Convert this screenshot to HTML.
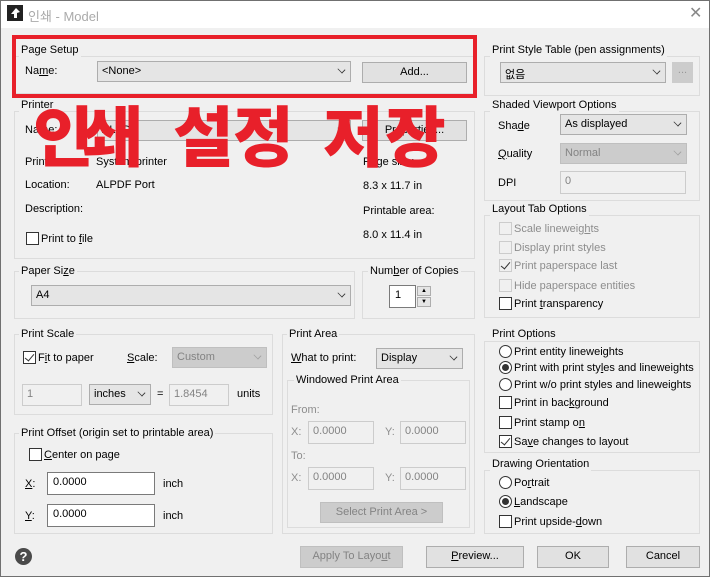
<!DOCTYPE html>
<html><head><meta charset="utf-8">
<style>
*{box-sizing:border-box;margin:0;padding:0}
body{width:710px;height:577px;overflow:hidden;background:#f0f0f0;font-family:"Liberation Sans","Noto Sans CJK KR",sans-serif;font-size:11px;color:#000;position:relative}
.a{position:absolute;white-space:nowrap}
.g{position:absolute;border:1px solid #dcdcdc}
.gl{position:absolute;background:#f0f0f0;padding:0 2px;white-space:nowrap;line-height:14px}
.cb{position:absolute;background:#e5e5e5;border:1px solid #adadad}
.cb span{position:absolute;left:4px;top:3px}
.cb i{position:absolute;right:5px;top:4px;width:7px;height:7px;border-right:1px solid #333;border-bottom:1px solid #333;transform:rotate(45deg) scale(.9,.7)}
.dis{background:#cccccc;border-color:#bfbfbf;color:#838383}
.dis i{border-color:#a0a0a0}
.btn{position:absolute;background:#e1e1e1;border:1px solid #adadad;text-align:center;line-height:19px}
.in{position:absolute;background:#fff;border:1px solid #7a7a7a;padding:3px 0 0 5px}
.ind{position:absolute;background:#f0f0f0;border:1px solid #ccc;padding:3px 0 0 4px;color:#838383}
.ck{position:absolute;width:13px;height:13px;border:1px solid #333;background:#fff}
.ckd{border-color:#ccc;background:#f0f0f0}
.rd{position:absolute;width:13px;height:13px;border:1px solid #333;border-radius:50%;background:#fff}
.rd.on::after{content:"";position:absolute;left:2px;top:2px;width:7px;height:7px;border-radius:50%;background:#333}
.tick::after{content:"";position:absolute;left:3px;top:0px;width:4px;height:8px;border-right:1.5px solid #333;border-bottom:1.5px solid #333;transform:rotate(40deg)}
.gr{color:#8d8d8d}
.big{position:absolute;color:#e8202a;font-family:"Noto Sans CJK KR",sans-serif;font-weight:900;font-size:66px;line-height:66px}
</style></head><body>
<div class="a" style="left:0;top:0;width:710px;height:28px;background:#fff"></div>
<div class="a" style="left:0;top:0;width:710px;height:577px;border:1px solid #707070"></div>
<svg class="a" style="left:7px;top:5px" width="16" height="16" viewBox="0 0 16 16"><rect width="16" height="16" fill="#222"/><path d="M4 9 L9 3 L13 7 L10 8 L10 13 L7 13 L7 9 Z" fill="#fff"/></svg>
<div class="a" style="left:28px;top:6px;font-size:13px;color:#aaa">인쇄 - Model</div>
<div class="a" style="left:689px;top:3px;font-size:16px;color:#888">✕</div>

<!-- Page Setup -->
<div class="g" style="left:14px;top:56px;width:461px;height:38px"></div>
<div class="gl" style="left:19px;top:43px">Page Setup</div>
<div class="a" style="left:25px;top:65px">Na<u>m</u>e:</div>
<div class="cb" style="left:97px;top:61px;width:254px;height:21px"><span>&lt;None&gt;</span><i></i></div>
<div class="btn" style="left:362px;top:62px;width:105px;height:21px">Add...</div>

<!-- Printer -->
<div class="g" style="left:14px;top:111px;width:461px;height:148px"></div>
<div class="gl" style="left:19px;top:98px">Printer</div>
<div class="a" style="left:25px;top:124px">Name:</div>
<div class="cb" style="left:97px;top:120px;width:254px;height:21px"><span>ALPDF</span><i></i></div>
<div class="btn" style="left:362px;top:120px;width:105px;height:21px">Properties...</div>
<div class="a" style="left:25px;top:156px">Printer:</div>
<div class="a" style="left:96px;top:156px">System printer</div>
<div class="a" style="left:25px;top:179px">Location:</div>
<div class="a" style="left:96px;top:179px">ALPDF Port</div>
<div class="a" style="left:25px;top:203px">Description:</div>
<div class="ck" style="left:26px;top:232px"></div>
<div class="a" style="left:41px;top:233px">Print to <u>f</u>ile</div>
<div class="a" style="left:363px;top:156px">Page size:</div>
<div class="a" style="left:363px;top:180px">8.3 x 11.7 in</div>
<div class="a" style="left:363px;top:205px">Printable area:</div>
<div class="a" style="left:363px;top:229px">8.0 x 11.4 in</div>

<!-- Paper size -->
<div class="g" style="left:14px;top:271px;width:341px;height:48px"></div>
<div class="gl" style="left:19px;top:264px">Paper Si<u>z</u>e</div>
<div class="cb" style="left:31px;top:285px;width:320px;height:21px"><span>A4</span><i></i></div>
<div class="g" style="left:362px;top:271px;width:113px;height:48px"></div>
<div class="gl" style="left:368px;top:264px">Num<u>b</u>er of Copies</div>
<div class="in" style="left:389px;top:285px;width:27px;height:23px">1</div>
<div class="a" style="left:417px;top:286px;width:14px;height:10px;border:1px solid #adadad;background:#e5e5e5;font-size:6px;text-align:center;line-height:8px">▲</div>
<div class="a" style="left:417px;top:297px;width:14px;height:10px;border:1px solid #adadad;background:#e5e5e5;font-size:6px;text-align:center;line-height:8px">▼</div>

<!-- Print Scale -->
<div class="g" style="left:14px;top:334px;width:259px;height:81px"></div>
<div class="gl" style="left:19px;top:327px">Print Scale</div>
<div class="ck tick" style="left:23px;top:351px"></div>
<div class="a" style="left:38px;top:352px">F<u>i</u>t to paper</div>
<div class="a" style="left:127px;top:352px"><u>S</u>cale:</div>
<div class="cb dis" style="left:172px;top:347px;width:95px;height:21px"><span>Custom</span><i></i></div>
<div class="ind" style="left:22px;top:384px;width:60px;height:22px">1</div>
<div class="cb" style="left:89px;top:384px;width:62px;height:21px"><span>inches</span><i></i></div>
<div class="a" style="left:157px;top:388px">=</div>
<div class="ind" style="left:169px;top:384px;width:60px;height:22px">1.8454</div>
<div class="a" style="left:237px;top:388px">units</div>

<!-- Print Offset -->
<div class="g" style="left:14px;top:433px;width:259px;height:101px"></div>
<div class="gl" style="left:19px;top:426px">Print Offset (origin set to printable area)</div>
<div class="ck" style="left:29px;top:448px"></div>
<div class="a" style="left:44px;top:449px"><u>C</u>enter on page</div>
<div class="a" style="left:25px;top:478px"><u>X</u>:</div>
<div class="in" style="left:47px;top:472px;width:108px;height:23px">0.0000</div>
<div class="a" style="left:163px;top:478px">inch</div>
<div class="a" style="left:25px;top:510px"><u>Y</u>:</div>
<div class="in" style="left:47px;top:504px;width:108px;height:23px">0.0000</div>
<div class="a" style="left:163px;top:510px">inch</div>

<!-- Print Area -->
<div class="g" style="left:282px;top:334px;width:193px;height:200px"></div>
<div class="gl" style="left:287px;top:327px">Print Area</div>
<div class="a" style="left:291px;top:352px"><u>W</u>hat to print:</div>
<div class="cb" style="left:376px;top:348px;width:87px;height:21px"><span>Display</span><i></i></div>
<div class="g" style="left:287px;top:380px;width:183px;height:148px"></div>
<div class="gl" style="left:294px;top:373px">Windowed Print Area</div>
<div class="a gr" style="left:291px;top:404px">From:</div>
<div class="a gr" style="left:291px;top:426px">X:</div>
<div class="ind" style="left:308px;top:421px;width:66px;height:23px">0.0000</div>
<div class="a gr" style="left:385px;top:426px">Y:</div>
<div class="ind" style="left:400px;top:421px;width:66px;height:23px">0.0000</div>
<div class="a gr" style="left:291px;top:450px">To:</div>
<div class="a gr" style="left:291px;top:472px">X:</div>
<div class="ind" style="left:308px;top:467px;width:66px;height:23px">0.0000</div>
<div class="a gr" style="left:385px;top:472px">Y:</div>
<div class="ind" style="left:400px;top:467px;width:66px;height:23px">0.0000</div>
<div class="btn" style="left:320px;top:502px;width:123px;height:21px;background:#ccc;border-color:#bfbfbf;color:#838383">Select Print Area &gt;</div>

<!-- Right column -->
<div class="g" style="left:484px;top:56px;width:216px;height:40px"></div>
<div class="gl" style="left:490px;top:43px">Print Style Table (pen assignments)</div>
<div class="cb" style="left:500px;top:62px;width:166px;height:21px"><span>없음</span><i></i></div>
<div class="btn" style="left:672px;top:62px;width:21px;height:21px;background:#ccc;border-color:#ccc;color:#999;line-height:15px">...</div>

<div class="g" style="left:484px;top:111px;width:216px;height:90px"></div>
<div class="gl" style="left:490px;top:98px">Shaded Viewport Options</div>
<div class="a" style="left:498px;top:120px">Sha<u>d</u>e</div>
<div class="cb" style="left:560px;top:114px;width:127px;height:21px"><span>As displayed</span><i></i></div>
<div class="a" style="left:498px;top:148px"><u>Q</u>uality</div>
<div class="cb dis" style="left:560px;top:143px;width:127px;height:21px"><span>Normal</span><i></i></div>
<div class="a" style="left:498px;top:177px">DPI</div>
<div class="ind" style="left:560px;top:171px;width:126px;height:23px">0</div>

<div class="g" style="left:484px;top:215px;width:216px;height:103px"></div>
<div class="gl" style="left:490px;top:202px">Layout Tab Options</div>
<div class="ck ckd" style="left:499px;top:222px"></div><div class="a gr" style="left:514px;top:223px">Scale lineweig<u>h</u>ts</div>
<div class="ck ckd" style="left:499px;top:241px"></div><div class="a gr" style="left:514px;top:242px">Display print styles</div>
<div class="ck ckd tick" style="left:499px;top:259px"></div><div class="a gr" style="left:514px;top:260px">Print paperspace last</div>
<div class="ck ckd" style="left:499px;top:279px"></div><div class="a gr" style="left:514px;top:280px">Hide paperspace entities</div>
<div class="ck" style="left:499px;top:297px"></div><div class="a" style="left:514px;top:298px">Print <u>t</u>ransparency</div>

<div class="g" style="left:484px;top:341px;width:216px;height:112px"></div>
<div class="gl" style="left:490px;top:327px">Print Options</div>
<div class="rd" style="left:499px;top:345px"></div><div class="a" style="left:514px;top:346px">Print entity lineweights</div>
<div class="rd on" style="left:499px;top:361px"></div><div class="a" style="left:514px;top:362px">Print with print sty<u>l</u>es and lineweights</div>
<div class="rd" style="left:499px;top:378px"></div><div class="a" style="left:514px;top:379px">Print w/o print styles and lineweights</div>
<div class="ck" style="left:499px;top:396px"></div><div class="a" style="left:514px;top:397px">Print in bac<u>k</u>ground</div>
<div class="ck" style="left:499px;top:416px"></div><div class="a" style="left:514px;top:417px">Print stamp o<u>n</u></div>
<div class="ck tick" style="left:499px;top:435px"></div><div class="a" style="left:514px;top:436px">Sa<u>v</u>e changes to layout</div>

<div class="g" style="left:484px;top:470px;width:216px;height:64px"></div>
<div class="gl" style="left:490px;top:457px">Drawing Orientation</div>
<div class="rd" style="left:499px;top:476px"></div><div class="a" style="left:514px;top:477px">Po<u>r</u>trait</div>
<div class="rd on" style="left:499px;top:495px"></div><div class="a" style="left:514px;top:496px"><u>L</u>andscape</div>
<div class="ck" style="left:499px;top:515px"></div><div class="a" style="left:514px;top:516px">Print upside-<u>d</u>own</div>

<!-- bottom -->
<div class="a" style="left:15px;top:548px;width:17px;height:17px;border-radius:50%;background:#4a4a4a;color:#fff;font-weight:bold;font-size:13px;text-align:center;line-height:17px">?</div>
<div class="btn" style="left:300px;top:546px;width:103px;height:22px;background:#ccc;border-color:#bfbfbf;color:#838383">Apply To Layo<u>u</u>t</div>
<div class="btn" style="left:426px;top:546px;width:98px;height:22px"><u>P</u>review...</div>
<div class="btn" style="left:537px;top:546px;width:72px;height:22px">OK</div>
<div class="btn" style="left:626px;top:546px;width:74px;height:22px">Cancel</div>

<!-- red overlay -->
<div class="a" style="left:12px;top:35px;width:465px;height:63px;border:4px solid #e8202a"></div>
<div class="big" style="left:33px;top:100px">인</div>
<div class="big" style="left:82px;top:100px">쇄</div>
<div class="big" style="left:173px;top:100px">설</div>
<div class="big" style="left:233px;top:100px">정</div>
<div class="big" style="left:323px;top:100px">저</div>
<div class="big" style="left:385px;top:100px">장</div>
</body></html>
